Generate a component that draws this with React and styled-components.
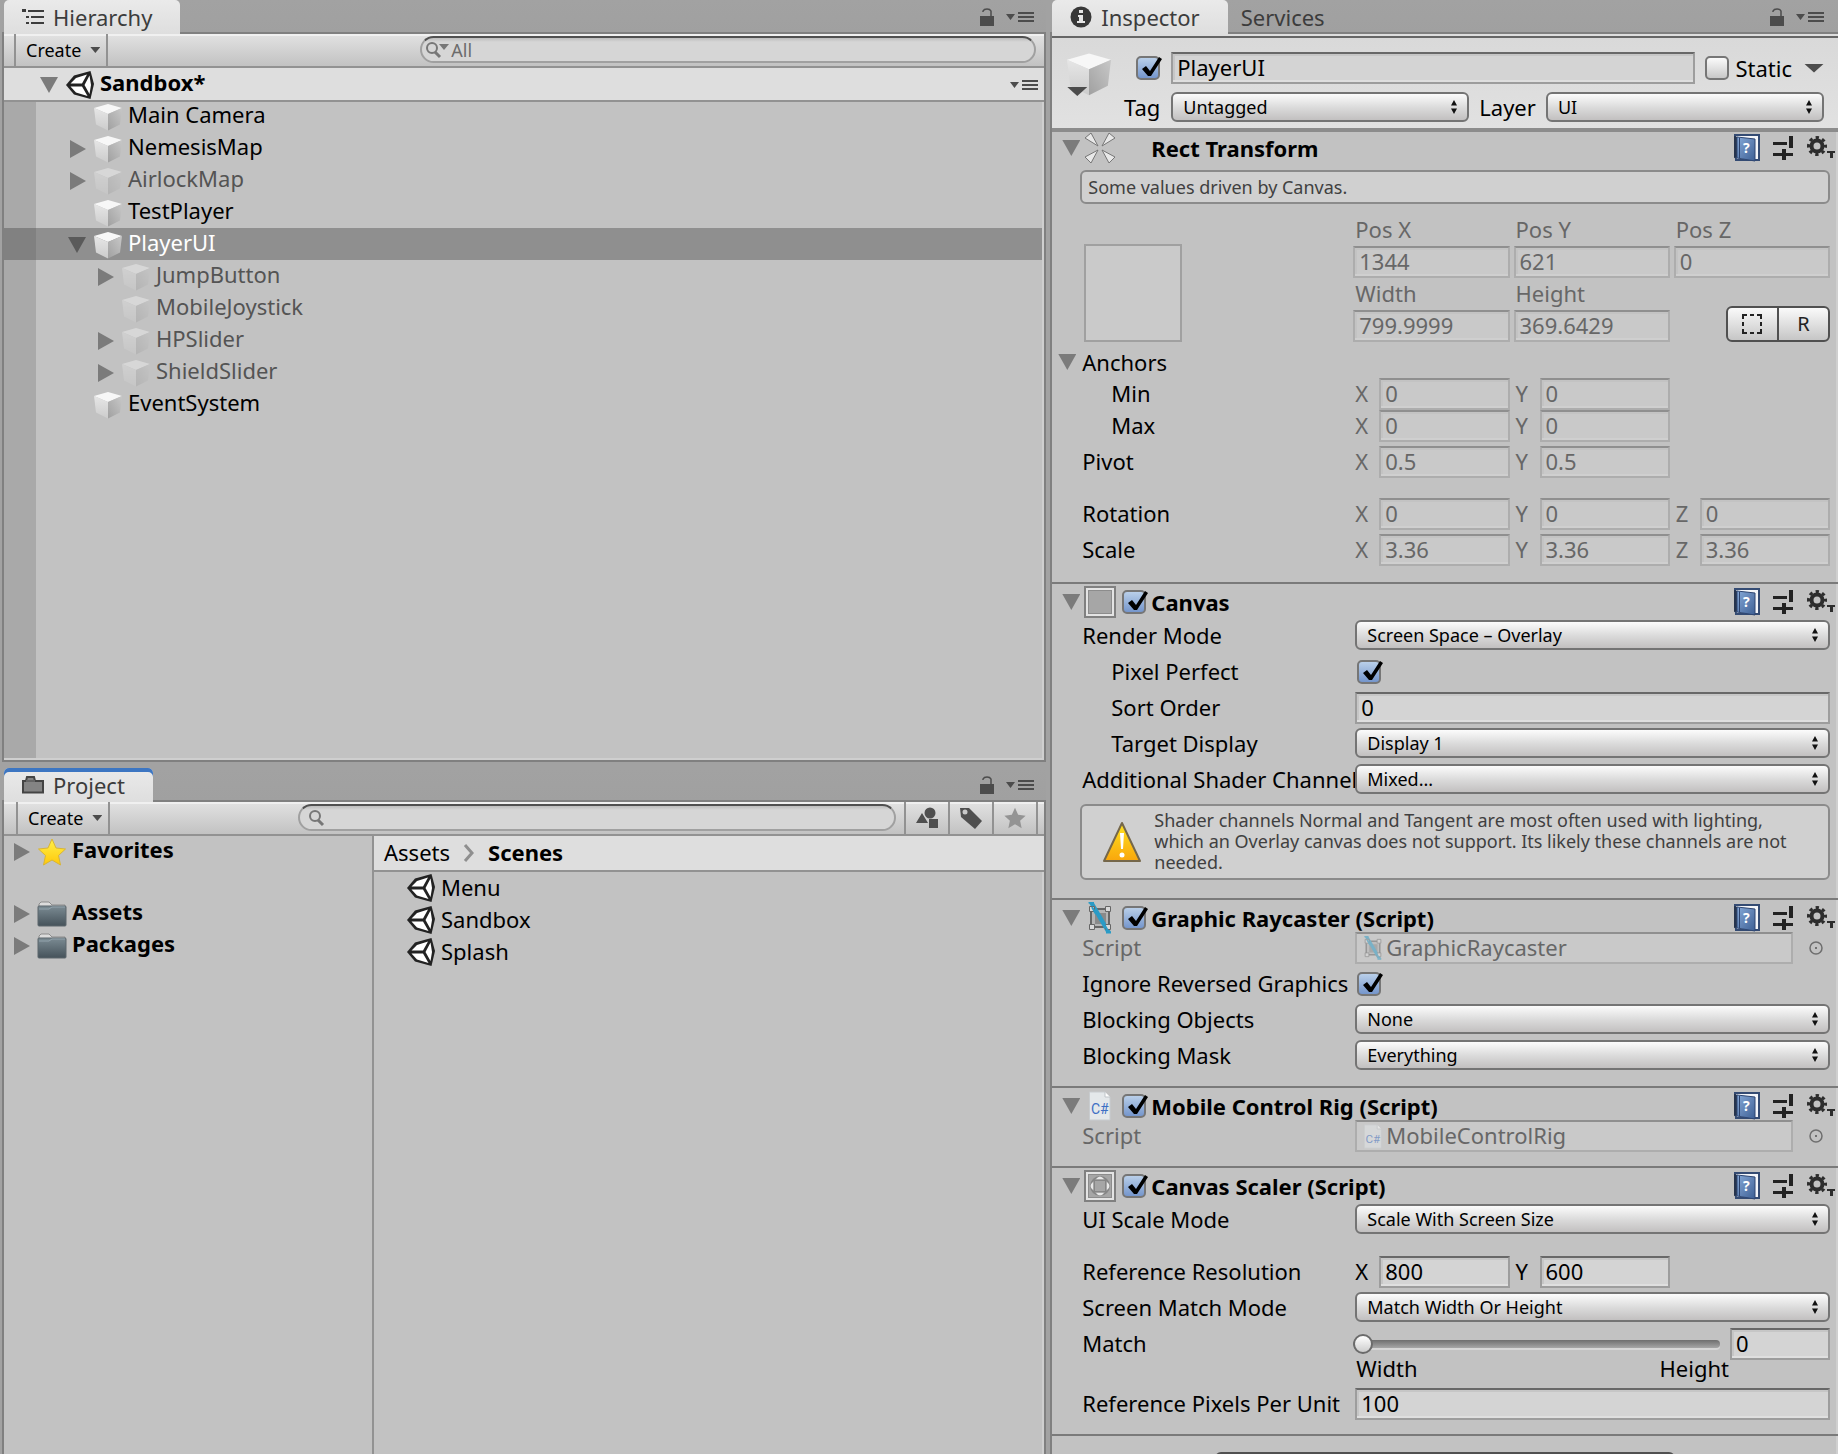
import React, { useId } from 'react'
import styled, { createGlobalStyle } from 'styled-components'


const colors = {
  panel: '#c2c2c2',
  strip: '#a2a2a2',
  line: '#808080',
  rule: '#929292',
  shine: '#cfcfcf',
  header: '#dedede',
  muted: '#676767',
  dim: '#545454',
  icon: '#4c4c4c',
}

const GlobalStyle = createGlobalStyle`
  * {
    box-sizing: border-box;
  }

  body {
    margin: 0;
    background: ${colors.strip};
    color: #000;
    font: 22px/32px "Noto Sans", "Open Sans", sans-serif;
  }

  button,
  input,
  select {
    margin: 0;
    border-radius: 0;
    font: inherit;
    color: inherit;
    outline: none;
  }

  svg {
    display: block;
    flex: none;
  }
`

/* Icons */

const Arrow = styled.span`
  flex: none;
  width: ${({ $open }) => $open ? 18 : 16}px;
  height: ${({ $open }) => $open ? 16 : 18}px;
  background: ${({ $dark }) => $dark ? '#5a5a5a' : '#7b7b7b'};
  clip-path: ${({ $open }) => $open
    ? 'polygon(0 0, 100% 0, 50% 100%)'
    : 'polygon(0 0, 100% 50%, 0 100%)'};
`
const SmallArrow = styled.span`
  flex: none;
  width: ${({ $wide }) => $wide ? 20 : 10}px;
  height: ${({ $wide }) => $wide ? 9 : 6}px;
  background: ${colors.icon};
  clip-path: polygon(0 0, 100% 0, 50% 100%);
`
const Cube = ({ size = 28, faded }) => (
  <svg width={size} height={size} viewBox="0 0 28 28" opacity={faded ? 0.4 : 1}>
    <defs>
      <linearGradient id="cube-left" x1="0" y1="0" x2="0" y2="1">
        <stop offset="0" stopColor="#e6e6e6" />
        <stop offset="1" stopColor="#cccccc" />
      </linearGradient>
      <linearGradient id="cube-right" x1="1" y1="0" x2="0" y2="1">
        <stop offset="0" stopColor="#c8c8c8" />
        <stop offset="1" stopColor="#a0a0a0" />
      </linearGradient>
    </defs>
    <path d="M0 5L14 1l14 4-14 6z" fill="#f7f7f7" />
    <path d="M0 5l14 6v16.500L2 21.500z" fill="url(#cube-left)" />
    <path d="M28 5l-14 6v16.500l12-6z" fill="url(#cube-right)" />
  </svg>
)
const SceneIcon = () => (
  <svg width="28" height="30" viewBox="0 0 28 30">
    <path d="M0 15L8 5.500 24.500 1 28 14l-3.500 15L8 24.500z" fill="#222" />
    <path d="M4.500 13.500L10 8l11-3.500-5 9zM4.500 16.500H16l5.500 9.500L10 22.500zM18.500 15l5-9.500L25 15l-1.500 9z" fill="#fff" />
  </svg>
)
const ListIcon = () => (
  <svg width="22" height="16" viewBox="0 0 22 16" fill="#3c3c3c">
    <path d="M0 0h4v3H0zM6 1h16v2H6zM4 7h3v2H4zM9 7h13v2H9zM4 13h3v2H4zM9 13h13v2H9z" />
  </svg>
)
const FolderTabIcon = () => (
  <svg width="22" height="18" viewBox="0 0 22 18">
    <path d="M1 16.500V5h3l1-4h7l1 4h8v11.500z" fill="#848484" stroke="#444" strokeWidth="2" />
    <path d="M4 5h9" stroke="#666" strokeWidth="2" />
  </svg>
)
const InfoIcon = () => (
  <svg width="22" height="22" viewBox="0 0 22 22">
    <circle cx="11" cy="11" r="10.500" fill="#383838" />
    <path d="M9 4h4v3H9zM8 9h5v6h2v2H7v-2h2v-4H8z" fill="#e6e6e6" />
  </svg>
)
const LockIcon = () => (
  <svg width="14" height="18" viewBox="0 0 14 18">
    <path d="M0 8h14v10H0z" fill={colors.icon} />
    <path d="M3 4V3q1-2 4-2t4 2v6" fill="none" stroke={colors.icon} strokeWidth="1.500" />
  </svg>
)
const MenuIcon = () => (
  <svg width="28" height="10" viewBox="0 0 28 10" fill={colors.icon}>
    <path d="M0 2h9L4.500 8zM12 0h16v2H12zM12 4h16v2H12zM12 8h16v2H12z" />
  </svg>
)
const SearchIcon = ({ arrow }) => (
  <svg width={arrow ? 23 : 16} height="18" viewBox={arrow ? '0 0 23 18' : '0 0 16 18'}>
    <circle cx="6" cy="7" r="5" fill="none" stroke="#777" strokeWidth="2" />
    <path d="M9 11l5 5" stroke="#777" strokeWidth="3" />
    {arrow && <path d="M13 3h10l-5 6z" fill="#777" />}
  </svg>
)
const ShapesIcon = () => (
  <svg width="22" height="22" viewBox="0 0 22 22" fill="#4f4f4f">
    <circle cx="14" cy="6" r="5.500" />
    <path d="M0 16L6 6l6 10zM13 12h9v9h-9z" />
  </svg>
)
const TagIcon = () => (
  <svg width="22" height="22" viewBox="0 0 22 22">
    <path d="M0 1h9l13 13-7 8L1 10z" fill="#4f4f4f" />
    <circle cx="5" cy="5" r="2.500" fill="#c8c8c8" />
  </svg>
)
const Star = ({ gold }) => (
  <svg width={gold ? 28 : 22} height={gold ? 28 : 22} viewBox="0 0 28 28">
    <defs>
      <linearGradient id="gold" x1="0" y1="0" x2="0" y2="1">
        <stop offset="0" stopColor="#fff04a" />
        <stop offset="1" stopColor="#ffc80a" />
      </linearGradient>
    </defs>
    <path
      d="M14 1l4 9 9.500 1-7 6.500 2 9.500-8.500-5-8.500 5 2-9.500L.5 11l9.500-1z"
      fill={gold ? 'url(#gold)' : '#949494'}
      stroke={gold ? '#d8b535' : 'none'}
    />
  </svg>
)
const Folder = () => (
  <svg width="30" height="26" viewBox="0 0 30 26">
    <defs>
      <linearGradient id="folder" x1="0" y1="0" x2="0" y2="1">
        <stop offset="0" stopColor="#7b8b93" />
        <stop offset="1" stopColor="#45525a" />
      </linearGradient>
    </defs>
    <path d="M2 7V3l2-2h8l3 3h13v4z" fill="#dcdcdc" stroke="#8d8d8d" />
    <rect x="1" y="5" width="28" height="20" rx="1" fill="url(#folder)" stroke="#5c676d" />
    <path d="M2 8h10l3-2h13" fill="none" stroke="#93a4ad" />
  </svg>
)
const Chevron = () => (
  <svg width="12" height="18" viewBox="0 0 12 18">
    <path d="M2 1l7 8-7 8" fill="none" stroke="#8f8f8f" strokeWidth="3" />
  </svg>
)
const RectIcon = () => (
  <svg width="32" height="32" viewBox="0 0 32 32" fill="#e8e8e8" stroke="#767676">
    <path d="M1 6l6-5 7 13zM31 6l-6-5-7 13zM1 25l6 6 7-13zM31 25l-6 6-7-13z" />
  </svg>
)
const CanvasIcon = ({ scaler }) => (
  <svg width="32" height="32" viewBox="0 0 32 32">
    <rect x="1" y="1" width="30" height="30" fill="#e4e4e4" stroke="#808080" strokeWidth="2" />
    <rect x="4.500" y="4.500" width="23" height="23" fill="#a6a6a6" stroke="#8c8c8c" />
    {scaler && (
      <>
        <circle cx="16" cy="16" r="9" fill="none" stroke="#868686" strokeWidth="2" />
        <path d="M12 9q4-5 8 0zM12 23q4 5 8 0zM9 12q-5 4 0 8zM23 12q5 4 0 8z" fill="#e8e8e8" />
        <rect x="10.500" y="10.500" width="11" height="11" fill="#a6a6a6" stroke="#868686" />
      </>
    )}
  </svg>
)
const RaycasterIcon = ({ size = 32, faded }) => (
  <svg width={size} height={size} viewBox="0 0 32 32" opacity={faded ? 0.5 : 1}>
    <path d="M7 7h18v18H7z" fill="#b4b4b4" stroke="#666" strokeWidth="2" />
    <path d="M11 11h11v11H11z" fill="#8a8a8a" />
    <path d="M5 1h5l17 29h-5z" fill="#2b9bc6" />
    <g fill="#d9d9d9" stroke="#666">
      <path d="M5.500 4.500h5v5h-5zM21.500 4.500h5v5h-5zM5.500 22.500h5v5h-5zM21.500 22.500h5v5h-5z" />
    </g>
    <path d="M4.500.5h5.500M22 30.500h5M8 5l4 7M20 22l4 7" stroke="#2b9bc6" strokeWidth="2" />
  </svg>
)
const CSharpIcon = ({ size = 30, faded }) => (
  <svg width={size * 0.8} height={size} viewBox="0 0 24 30" opacity={faded ? 0.5 : 1}>
    <path d="M1.500 1H17l5 5v23H1.500z" fill="#e4e8ea" stroke="#c8cccf" />
    <path d="M17 1v5h5" fill="#fff" stroke="#bfc4c8" />
    <text x="3" y="23" fontSize="14" fontFamily="Roboto, sans-serif" fill="#3d6fc4">C#</text>
  </svg>
)
const BookIcon = () => (
  <svg width="26" height="28" viewBox="0 0 26 28">
    <defs>
      <linearGradient id="book" x1="0" y1="0" x2="1" y2="1">
        <stop offset="0" stopColor="#86a9d8" />
        <stop offset="1" stopColor="#3d5f94" />
      </linearGradient>
    </defs>
    <path d="M1 1h24v25H2z" fill="#f4f6fa" stroke="#344b73" strokeWidth="2" />
    <path d="M0 2l4 1v20l-4 1z" fill="#26344d" />
    <path d="M3 3l18 2v22L3 24z" fill="url(#book)" stroke="#2e4672" />
    <path d="M5.500 4v20" stroke="#2c436e" />
    <text x="9" y="19" fontSize="14" fontWeight="700" fontFamily="Noto Sans, sans-serif" fill="#fff">?</text>
  </svg>
)
const SlidersIcon = () => (
  <svg width="21" height="24" viewBox="0 0 21 24" fill="#222">
    <path d="M0 6h14v3H0zM16 0h4v12h-4zM0 17h7v3H0zM15 17h5v3h-5zM9 13h4v11H9zM7 17h8v3H7z" />
  </svg>
)
const GearIcon = () => (
  <svg width="28" height="24" viewBox="0 0 28 24">
    <circle cx="10" cy="10" r="8.500" fill="none" stroke="#2d2d2d" strokeWidth="3" strokeDasharray="3.340" strokeDashoffset="1.670" />
    <circle cx="10" cy="10" r="5.500" fill="none" stroke="#2d2d2d" strokeWidth="4" />
    <path d="M20 15h8v2h-2v5h-3v-5h-3z" fill="#2d2d2d" />
  </svg>
)
const WarningIcon = () => (
  <svg width="40" height="42" viewBox="0 0 40 42">
    <defs>
      <linearGradient id="warn" x1="0" y1="0" x2="0" y2="1">
        <stop offset="0" stopColor="#ffe21f" />
        <stop offset="1" stopColor="#f9a60c" />
      </linearGradient>
    </defs>
    <path d="M20 2L38 40H2z" fill="url(#warn)" stroke="#75674a" strokeWidth="2" strokeLinejoin="round" />
    <path d="M18 12h4l-1 16h-2z" fill="#fff" />
    <circle cx="20" cy="34" r="2.500" fill="#fff" />
  </svg>
)
const PickerIcon = () => (
  <svg width="16" height="16" viewBox="0 0 16 16">
    <circle cx="8" cy="8" r="6" fill="none" stroke="#6e6e6e" strokeWidth="1.500" />
    <circle cx="8" cy="8" r="1" fill="#555" />
  </svg>
)

/* Window chrome */

const Editor = styled.div`
  display: grid;
  grid-template-columns: 4fr 3fr;
  height: 100vh;
  overflow: hidden;
  white-space: nowrap;
`
const LeftColumn = styled.div`
  display: flex;
  flex-direction: column;
  gap: 6px;
  min-width: 0;
  min-height: 0;
  padding: 0 4px 0 2px;
`
const Panel = styled.section`
  display: flex;
  flex-direction: column;
  flex: ${({ $grow }) => $grow} 1 0;
  min-width: 0;
  min-height: 0;
`
const TabBar = styled.div`
  display: flex;
  align-items: center;
  height: 34px;
  padding: 0 2px;
  background: linear-gradient(${colors.strip}, #a0a0a0);
  box-shadow: inset 0 -2px ${colors.line};
`
const Tab = styled.button`
  display: flex;
  align-items: center;
  gap: 9px;
  height: 34px;
  padding: 0 ${({ $active }) => $active ? '28px 0 18px' : '13px'};
  border: 0;
  border-radius: 5px 5px 0 0;
  background: ${({ $active }) => $active ? 'linear-gradient(#eaeaea, #dedede)' : 'none'};
  ${({ $focused }) => $focused && 'box-shadow: inset 0 4px #3d76c2;'}
  color: #3c3c3c;
`
const TabTools = styled.div`
  display: flex;
  align-items: center;
  gap: 12px;
  margin-left: auto;
  padding-right: ${({ $end }) => $end || 10}px;
`
const IconButton = styled.button`
  display: flex;
  padding: 0;
  border: 0;
  background: none;
`
const PanelBody = styled.div`
  display: flex;
  flex: 1;
  flex-direction: column;
  min-height: 0;
  border: solid ${colors.line};
  border-width: 0 2px ${({ $bleed }) => $bleed ? 0 : 2}px;
  background: ${colors.panel};
  box-shadow: inset -2px ${({ $bleed }) => $bleed ? 0 : -2}px ${colors.shine};
`
const Toolbar = styled.div`
  display: flex;
  flex: none;
  height: 34px;
  padding-right: ${({ $end }) => $end || 0}px;
  border-bottom: 2px solid ${colors.rule};
  background: linear-gradient(#f0f0f0 2px, #e0e0e0 2px, #c2c2c2);
`
const toolButton = `
  display: flex;
  align-items: center;
  padding: 0;
  border: solid ${colors.rule};
  border-width: 0 2px;
  background: none;
`
const CreateButton = styled.button`
  ${toolButton}
  gap: 9px;
  width: 94px;
  margin-left: ${({ $inset }) => $inset}px;
  padding-left: 10px;
  font-size: 18px;
`
const FilterButton = styled.button`
  ${toolButton}
  justify-content: center;
  width: 46px;
  margin-right: -2px;
`
const SearchBox = styled.label`
  display: flex;
  align-items: center;
  gap: 2px;
  flex: 0 1 ${({ $width }) => $width}px;
  height: 27px;
  margin: 2px 8px 0 auto;
  padding: 0 10px 0 ${({ $filter }) => $filter ? 4 : 9}px;
  border: 2px solid #a0a0a0;
  border-top-color: #505050;
  border-radius: 14px;
  background: linear-gradient(#bdbdbd, #d6d6d6 4px);
`
const SearchInput = styled.input`
  flex: 1;
  min-width: 0;
  height: 22px;
  padding: 0;
  border: 0;
  background: none;
  font-size: 18px;

  &::placeholder {
    color: #6c6c6c;
    opacity: 1;
  }
`

/* Hierarchy */

const RowText = styled.span`
  padding-bottom: 6px;
  line-height: 26px;
`
const SceneHeader = styled.div`
  position: relative;
  display: flex;
  align-items: center;
  flex: none;
  height: 32px;
  padding: 2px 6px 0 36px;
  background: ${colors.header};
  box-shadow: 0 2px ${colors.rule};
  font-weight: 700;
`
const SceneName = styled.span`
  display: flex;
  align-items: center;
  gap: 6px;
  margin: 0 auto 0 8px;
`
const Tree = styled.ul`
  flex: 1;
  min-height: 0;
  margin: 0 2px 2px 0;
  padding: 0;
  background: linear-gradient(to right, #a9a9a9 32px, ${colors.panel} 32px);
  list-style: none;
`
const TreeItem = styled.li`
  display: flex;
  align-items: center;
  gap: 6px;
  height: 32px;
  padding: 2px 0 0 ${({ $depth }) => 64 + $depth * 28}px;
  ${({ $selected }) => $selected && 'background: linear-gradient(to right, #818181 32px, #8f8f8f 32px);'}
  color: ${({ $selected, $faded }) => $selected ? '#fff' : $faded ? colors.dim : '#000'};
`
const ArrowSlot = styled.span`
  display: flex;
  flex: none;
  width: 20px;
  padding-left: ${({ $open }) => $open ? 0 : 2}px;
`

/* Project */

const ProjectBody = styled.div`
  display: grid;
  grid-template-columns: 370px 1fr;
  flex: 1;
  min-height: 0;
`
const FolderTree = styled.ul`
  margin: 0;
  padding: 0 0 0 10px;
  border-right: 2px solid ${colors.rule};
  list-style: none;
`
const FolderItem = styled.li`
  display: flex;
  align-items: center;
  gap: 7px;
  height: 32px;
  margin-bottom: ${({ $spaced }) => $spaced ? 30 : 0}px;
  font-weight: 700;
`
const FolderGlyph = styled.span`
  display: flex;
  justify-content: center;
  width: 30px;
  margin-right: -2px;
`
const Breadcrumb = styled.nav`
  display: flex;
  align-items: center;
  gap: 13px;
  height: 36px;
  padding-left: 10px;
  border-bottom: 2px solid ${colors.rule};
  background: ${colors.header};
`
const Crumb = styled.a`
  padding-bottom: 2px;
  color: #000;
  font-weight: ${({ $current }) => $current ? 700 : 400};
  line-height: 30px;
  text-decoration: none;
`
const AssetList = styled.ul`
  margin: 0;
  padding: 0 0 0 33px;
  list-style: none;
`
const AssetItem = styled.li`
  display: flex;
  align-items: center;
  gap: 6px;
  height: 32px;

  > span {
    padding-bottom: 2px;
    line-height: 30px;
  }
`

/* Inspector */

const InspectorBody = styled.div`
  flex: 1;
  min-height: 0;
  overflow: hidden;
  border-left: 2px solid ${colors.line};
  background: ${colors.panel};
  box-shadow: inset -2px 0 ${colors.shine};
`
const ObjectHeader = styled.header`
  display: flex;
  gap: 10px;
  padding: 18px 14px 6px 15px;
  border-bottom: 4px solid #8c8c8c;
  background: linear-gradient(#dedede 2px, #666 2px, #666 4px, #d9d9d9 4px, #e1e1e1);
`
const ObjectIcon = styled.div`
  display: grid;
  width: 44px;
  height: 44px;

  > * {
    grid-area: 1 / 1;
  }

  > span {
    align-self: end;
  }
`
const ObjectRows = styled.div`
  display: grid;
  flex: 1;
  gap: 8px;
  min-width: 0;
`
const ObjectRow = styled.div`
  display: flex;
  align-items: center;
  gap: 10px;
  height: ${({ $short }) => $short ? 30 : 32}px;
`
const Leading = styled.span`
  display: flex;
  justify-content: flex-end;
  width: 40px;
  padding-right: 1px;
`
const StaticLabel = styled.label`
  display: flex;
  align-items: center;
  gap: 6px;
  margin-right: 2px;
`
const Section = styled.section`
  padding: ${({ $first }) => $first ? 0 : 2}px 8px ${({ $end }) => $end || 14}px 0;
  border-bottom: 2px solid #7a7a7a;
`
const SectionHeader = styled.header`
  display: flex;
  align-items: center;
  height: 32px;
  margin: 0 -8px ${({ $tight }) => $tight ? -2 : 2}px 10px;
  padding-right: 3px;
`
const SectionIcon = styled.span`
  display: flex;
  justify-content: center;
  width: 32px;
  margin: 0 6px 0 4px;
`
const SectionTitle = styled.h2`
  margin: 0;
  padding-left: ${({ $offset }) => $offset ? 29 : 5}px;
  font: inherit;
  font-weight: 700;
`
const SectionTools = styled.div`
  display: flex;
  align-items: center;
  gap: 13px;
  margin-left: auto;
`
const Row = styled.div`
  display: flex;
  height: 32px;
  margin-top: ${({ $gap }) => $gap === undefined ? 4 : $gap}px;
  padding-left: 30px;

  ${SectionHeader} + & {
    margin-top: 0;
  }
`
const RowLabel = styled.label`
  flex: none;
  width: 273px;
  margin-right: -2px;
  padding-left: ${({ $nested }) => $nested ? 29 : 0}px;
  overflow: hidden;
  color: ${({ $muted }) => $muted ? colors.muted : '#000'};
  line-height: 30px;
`
const Control = styled.div`
  display: flex;
  flex: 1;
  align-items: ${({ $middle }) => $middle ? 'center' : 'flex-start'};
  gap: 10px;
  min-width: 0;
  padding-left: ${({ $flush, $middle }) => $flush ? 0 : $middle ? 4 : 2}px;
`
const Foldout = styled.button`
  display: flex;
  align-items: center;
  gap: 6px;
  height: 32px;
  margin: 4px 0 0 6px;
  padding: 0;
  border: 0;
  background: none;
`
const TextBox = styled.input`
  flex: ${({ $fixed }) => $fixed ? '0 0 100px' : '1'};
  width: 0;
  min-width: 0;
  height: 32px;
  padding: 0 4px 2px;
  border: 2px solid #9d9d9d;
  border-top-color: #686868;
  background: #d4d4d4;
  box-shadow: inset 0 -2px #dfdfdf, inset 2px 2px #c6c6c6;

  &:disabled {
    border-color: #adadad;
    border-top-color: #8f8f8f;
    background: #c9c9c9;
    box-shadow: inset 0 -2px #cfcfcf, inset 2px 2px #c3c3c3;
    color: ${colors.muted};
  }
`
const Stack = styled.span`
  display: inline-grid;
  flex: ${({ $grow }) => $grow || 'none'};
  min-width: 0;

  > * {
    grid-area: 1 / 1;
  }

  > svg {
    align-self: center;
    justify-self: end;
    margin-right: ${({ $grow }) => $grow ? 12 : -2}px;
    pointer-events: none;
  }
`
const SelectBox = styled.select`
  width: 100%;
  height: 30px;
  padding: 0 24px 0 10px;
  appearance: none;
  border: 2px solid #747474;
  border-radius: 6px;
  background: linear-gradient(#fcfcfc, #dcdcdc 50%, #c2c0c0);
  font-size: 18px;
  line-height: 24px;
`
const CheckInput = styled.input`
  width: 24px;
  height: 24px;
  appearance: none;
  border: 2px solid #767676;
  border-radius: 5px;
  background: linear-gradient(#fbfbfb, #c8c8c8);

  + svg {
    visibility: hidden;
  }

  &:checked {
    background: linear-gradient(#b9cfe9, #7596cc);
  }

  &:checked + svg {
    visibility: visible;
  }
`
const Vector = styled.div`
  display: grid;
  grid-template-columns: repeat(3, 1fr);
  gap: 0 4px;
  flex: 1;
  min-width: 0;
`
const Axis = styled.label`
  display: flex;
  min-width: 0;
  padding-left: 2px;
  color: ${({ $muted }) => $muted ? colors.muted : '#000'};
  line-height: 30px;
`
const AxisName = styled.span`
  width: 24px;
`
const HelpBox = styled.div`
  display: flex;
  align-items: center;
  gap: 12px;
  margin: ${({ $top }) => $top}px 0 0 28px;
  padding: ${({ $warning }) => $warning ? '4px 20px 5px' : '4px 6px'};
  border: 2px solid #8b8b8b;
  border-radius: 6px;
  background: #d0d0d0;
  color: #404040;
  font-size: 18px;
  line-height: ${({ $warning }) => $warning ? 21 : 22}px;
  white-space: normal;
`
const RectArea = styled.div`
  display: flex;
  align-items: flex-end;
  margin-top: 10px;
  padding-left: 32px;
`
const AnchorPreview = styled.div`
  width: 98px;
  height: 98px;
  margin-right: 171px;
  border: 2px solid #a0a0a0;
  background: #cacaca;
`
const LabelledBox = styled.label`
  display: flex;
  flex-direction: column;
  min-width: 0;
  color: ${colors.muted};

  > span {
    height: 32px;
    padding-left: 2px;
    line-height: 30px;
  }

  > input {
    flex: none;
    width: 100%;
  }
`
const ModeButtons = styled.div`
  display: flex;
  align-self: end;
  justify-self: end;
  width: 104px;
  height: 36px;
  border: 2px solid #505050;
  border-radius: 6px;
  background: linear-gradient(#fafafa, #c6c6c6);
`
const ModeButton = styled.button`
  display: flex;
  flex: 1;
  align-items: center;
  justify-content: center;
  padding: 0;
  border: 0;
  background: none;
  color: #222;
  font-size: 20px;

  + button {
    border-left: 2px solid #505050;
  }
`
const ObjectField = styled.div`
  display: flex;
  align-items: center;
  gap: 1px;
  flex: 1;
  height: 32px;
  padding-left: 4px;
  border: 2px solid #adadad;
  border-top-color: #8f8f8f;
  background: #c9c9c9;

  > input {
    flex: 1;
    min-width: 0;
    padding: 0 0 2px;
    border: 0;
    background: none;
    color: ${colors.muted};
  }
`
const FieldIcon = styled.span`
  display: flex;
  justify-content: center;
  width: 24px;
`
const Picker = styled(IconButton)`
  align-self: center;
  margin: 0 6px 0 5px;
`
const Slider = styled.input`
  flex: 1;
  min-width: 0;
  height: 32px;
  appearance: none;
  background: none;

  &::-webkit-slider-runnable-track {
    height: 8px;
    border-radius: 4px;
    background: linear-gradient(#6e6e6e, #a6a6a6);
    box-shadow: 0 2px #d6d6d6;
  }

  &::-webkit-slider-thumb {
    width: 20px;
    height: 20px;
    margin-top: -6px;
    appearance: none;
    border: 2px solid #6b6b6b;
    border-radius: 50%;
    background: linear-gradient(#fff, #cdcdcd);
  }
`
const SliderEnds = styled.div`
  display: flex;
  justify-content: space-between;
  height: 18px;
  padding: 0 101px 0 304px;
  line-height: 16px;
`
const AddButton = styled.button`
  display: block;
  width: 460px;
  height: 44px;
  margin: 16px auto 0;
  border: 2px solid #505050;
  border-radius: 6px;
  background: linear-gradient(#fafafa, #c6c6c6);
`

const Check = (props) => (
  <Stack>
    <CheckInput type="checkbox" {...props} />
    <svg width="22" height="24" viewBox="0 0 22 24">
      <path d="M2 13l4-3 4 5L19 1l3 2-11 17H8z" fill="#000" />
    </svg>
  </Stack>
)
const Select = ({ value, grow = '1', ...props }) => (
  <Stack $grow={grow}>
    <SelectBox defaultValue={value} {...props}>
      <option>{value}</option>
    </SelectBox>
    <svg width="6" height="14" viewBox="0 0 6 14">
      <path d="M0 5.500L3 0l3 5.500zM0 8.500L3 14l3-5.500z" fill="#111" />
    </svg>
  </Stack>
)

const PopupRow = ({ label, value, nested, gap }) => {
  const id = useId()

  return (
    <Row $gap={gap}>
      <RowLabel htmlFor={id} $nested={nested}>{label}</RowLabel>
      <Control>
        <Select id={id} value={value} />
      </Control>
    </Row>
  )
}
const CheckRow = ({ label, nested }) => {
  const id = useId()

  return (
    <Row>
      <RowLabel htmlFor={id} $nested={nested}>{label}</RowLabel>
      <Control $middle>
        <Check id={id} defaultChecked />
      </Control>
    </Row>
  )
}
const TextRow = ({ label, value, nested, gap }) => {
  const id = useId()

  return (
    <Row $gap={gap}>
      <RowLabel htmlFor={id} $nested={nested}>{label}</RowLabel>
      <Control>
        <TextBox id={id} defaultValue={value} />
      </Control>
    </Row>
  )
}
const VectorRow = ({ label, values, nested, gap, disabled }) => (
  <Row $gap={gap}>
    <RowLabel as="span" $nested={nested}>{label}</RowLabel>
    <Vector>
      {values.map((value, index) => (
        <Axis key={index} $muted={disabled}>
          <AxisName>{'XYZ'[index]}</AxisName>
          <TextBox defaultValue={value} disabled={disabled} />
        </Axis>
      ))}
    </Vector>
  </Row>
)
const ScriptRow = ({ icon, value }) => {
  const id = useId()

  return (
    <Row>
      <RowLabel htmlFor={id} $muted>Script</RowLabel>
      <Control>
        <ObjectField>
          <FieldIcon>{icon}</FieldIcon>
          <input id={id} defaultValue={value} disabled />
        </ObjectField>
        <Picker aria-label="Select script"><PickerIcon /></Picker>
      </Control>
    </Row>
  )
}
const ComponentSection = ({
  title,
  icon,
  first,
  tight,
  end,
  children,
}) => (
  <Section $first={first} $end={end}>
    <SectionHeader $tight={tight}>
      <Arrow $open />
      <SectionIcon>{icon}</SectionIcon>
      {!first && <Check aria-label={`${title} enabled`} defaultChecked />}
      <SectionTitle $offset={first}>{title}</SectionTitle>
      <SectionTools>
        <IconButton aria-label="Help"><BookIcon /></IconButton>
        <IconButton aria-label="Presets"><SlidersIcon /></IconButton>
        <IconButton aria-label="Options"><GearIcon /></IconButton>
      </SectionTools>
    </SectionHeader>
    {children}
  </Section>
)
const PanelTools = ({ end }) => (
  <TabTools $end={end}>
    <IconButton aria-label="Lock"><LockIcon /></IconButton>
    <IconButton aria-label="Panel menu"><MenuIcon /></IconButton>
  </TabTools>
)

const objects = [
  { name: 'Main Camera' },
  { name: 'NemesisMap', arrow: true },
  { name: 'AirlockMap', arrow: true, faded: true },
  { name: 'TestPlayer' },
  { name: 'PlayerUI', arrow: true, open: true, selected: true },
  { name: 'JumpButton', arrow: true, faded: true, depth: 1 },
  { name: 'MobileJoystick', faded: true, depth: 1 },
  { name: 'HPSlider', arrow: true, faded: true, depth: 1 },
  { name: 'ShieldSlider', arrow: true, faded: true, depth: 1 },
  { name: 'EventSystem' },
]

const Hierarchy = () => (
  <Panel $grow={10}>
    <TabBar>
      <Tab $active><ListIcon />Hierarchy</Tab>
      <PanelTools />
    </TabBar>
    <PanelBody>
      <Toolbar>
        <CreateButton $inset={10}>Create<SmallArrow /></CreateButton>
        <SearchBox $width={616} $filter>
          <SearchIcon arrow />
          <SearchInput placeholder="All" aria-label="Search hierarchy" />
        </SearchBox>
      </Toolbar>
      <SceneHeader>
        <Arrow $open />
        <SceneName><SceneIcon /><RowText>Sandbox*</RowText></SceneName>
        <IconButton aria-label="Scene menu"><MenuIcon /></IconButton>
      </SceneHeader>
      <Tree>
        {objects.map(({ name, arrow, open, selected, faded, depth = 0 }) => (
          <TreeItem
            key={name}
            $depth={depth}
            $selected={selected}
            $faded={faded}
          >
            <ArrowSlot $open={open}>
              {arrow && <Arrow $open={open} $dark={selected} />}
            </ArrowSlot>
            <Cube faded={faded} />
            <RowText>{name}</RowText>
          </TreeItem>
        ))}
      </Tree>
    </PanelBody>
  </Panel>
)

const Project = () => (
  <Panel $grow={9}>
    <TabBar>
      <Tab $active $focused><FolderTabIcon />Project</Tab>
      <PanelTools />
    </TabBar>
    <PanelBody $bleed>
      <Toolbar $end={8}>
        <CreateButton $inset={12}>Create<SmallArrow /></CreateButton>
        <SearchBox $width={598}>
          <SearchIcon />
          <SearchInput aria-label="Search project" />
        </SearchBox>
        <FilterButton aria-label="Search by type"><ShapesIcon /></FilterButton>
        <FilterButton aria-label="Search by label"><TagIcon /></FilterButton>
        <FilterButton aria-label="Save search"><Star /></FilterButton>
      </Toolbar>
      <ProjectBody>
        <FolderTree>
          <FolderItem $spaced>
            <Arrow /><FolderGlyph><Star gold /></FolderGlyph><RowText>Favorites</RowText>
          </FolderItem>
          <FolderItem>
            <Arrow /><FolderGlyph><Folder /></FolderGlyph><RowText>Assets</RowText>
          </FolderItem>
          <FolderItem>
            <Arrow /><FolderGlyph><Folder /></FolderGlyph><RowText>Packages</RowText>
          </FolderItem>
        </FolderTree>
        <div>
          <Breadcrumb>
            <Crumb href="#assets">Assets</Crumb>
            <Chevron />
            <Crumb href="#scenes" $current>Scenes</Crumb>
          </Breadcrumb>
          <AssetList>
            {['Menu', 'Sandbox', 'Splash'].map((name) => (
              <AssetItem key={name}><SceneIcon /><span>{name}</span></AssetItem>
            ))}
          </AssetList>
        </div>
      </ProjectBody>
    </PanelBody>
  </Panel>
)

const Inspector = () => (
  <Panel $grow={1}>
    <TabBar>
      <Tab $active><InfoIcon />Inspector</Tab>
      <Tab>Services</Tab>
      <PanelTools end={12} />
    </TabBar>
    <InspectorBody>
      <ObjectHeader>
        <ObjectIcon>
          <Cube size={44} />
          <SmallArrow $wide />
        </ObjectIcon>
        <ObjectRows>
          <ObjectRow>
            <Leading><Check aria-label="Active" defaultChecked /></Leading>
            <TextBox aria-label="Name" defaultValue="PlayerUI" />
            <StaticLabel><Check />Static</StaticLabel>
            <SmallArrow $wide />
          </ObjectRow>
          <ObjectRow $short>
            <Leading as="label" htmlFor="tag">Tag</Leading>
            <Select id="tag" value="Untagged" grow="15 1 0" />
            <label htmlFor="layer">Layer</label>
            <Select id="layer" value="UI" grow="14 1 0" />
          </ObjectRow>
        </ObjectRows>
      </ObjectHeader>

      <ComponentSection title="Rect Transform" icon={<RectIcon />} first end={16}>
        <HelpBox $top={6}>Some values driven by Canvas.</HelpBox>
        <RectArea>
          <AnchorPreview />
          <Vector>
            {[
              ['Pos X', '1344'],
              ['Pos Y', '621'],
              ['Pos Z', '0'],
              ['Width', '799.9999'],
              ['Height', '369.6429'],
            ].map(([label, value]) => (
              <LabelledBox key={label}>
                <span>{label}</span>
                <TextBox defaultValue={value} disabled />
              </LabelledBox>
            ))}
            <ModeButtons>
              <ModeButton aria-label="Blueprint mode">
                <svg width="20" height="20" viewBox="0 0 20 20">
                  <path d="M1 5V1h4M8 1h4M15 1h4v4M19 8v4M19 15v4h-4M12 19H8M5 19H1v-4M1 12V8" fill="none" stroke="#222" strokeWidth="2" />
                </svg>
              </ModeButton>
              <ModeButton aria-label="Raw edit mode">R</ModeButton>
            </ModeButtons>
          </Vector>
        </RectArea>
        <Foldout><Arrow $open />Anchors</Foldout>
        <VectorRow label="Min" values={['0', '0']} nested gap={0} disabled />
        <VectorRow label="Max" values={['0', '0']} nested gap={0} disabled />
        <VectorRow label="Pivot" values={['0.5', '0.5']} disabled />
        <VectorRow label="Rotation" values={['0', '0', '0']} gap={20} disabled />
        <VectorRow label="Scale" values={['3.36', '3.36', '3.36']} disabled />
      </ComponentSection>

      <ComponentSection title="Canvas" icon={<CanvasIcon />} end={18}>
        <PopupRow label="Render Mode" value="Screen Space – Overlay" />
        <CheckRow label="Pixel Perfect" nested />
        <TextRow label="Sort Order" value="0" nested />
        <PopupRow label="Target Display" value="Display 1" nested />
        <PopupRow label="Additional Shader Channels" value="Mixed..." />
        <HelpBox $top={8} $warning>
          <WarningIcon />
          Shader channels Normal and Tangent are most often used with lighting,
          which an Overlay canvas does not support. Its likely these channels are not needed.
        </HelpBox>
      </ComponentSection>

      <ComponentSection title="Graphic Raycaster (Script)" icon={<RaycasterIcon />} tight>
        <ScriptRow icon={<RaycasterIcon size={24} faded />} value="GraphicRaycaster" />
        <CheckRow label="Ignore Reversed Graphics" />
        <PopupRow label="Blocking Objects" value="None" />
        <PopupRow label="Blocking Mask" value="Everything" />
      </ComponentSection>

      <ComponentSection title="Mobile Control Rig (Script)" icon={<CSharpIcon />} tight>
        <ScriptRow icon={<CSharpIcon size={25} faded />} value="MobileControlRig" />
      </ComponentSection>

      <ComponentSection title="Canvas Scaler (Script)" icon={<CanvasIcon scaler />}>
        <PopupRow label="UI Scale Mode" value="Scale With Screen Size" />
        <VectorRow label="Reference Resolution" values={['800', '600']} gap={20} />
        <PopupRow label="Screen Match Mode" value="Match Width Or Height" />
        <Row>
          <RowLabel htmlFor="match">Match</RowLabel>
          <Control $flush>
            <Slider id="match" type="range" min="0" max="1" step="0.01" defaultValue="0" />
            <TextBox $fixed aria-label="Match value" defaultValue="0" />
          </Control>
        </Row>
        <SliderEnds>
          <span>Width</span>
          <span>Height</span>
        </SliderEnds>
        <TextRow label="Reference Pixels Per Unit" value="100" gap={10} />
      </ComponentSection>

      <AddButton aria-label="Add Component" />
    </InspectorBody>
  </Panel>
)

const App = () => (
  <>
    <GlobalStyle />
    <Editor>
      <LeftColumn>
        <Hierarchy />
        <Project />
      </LeftColumn>
      <Inspector />
    </Editor>
  </>
)

export default App
